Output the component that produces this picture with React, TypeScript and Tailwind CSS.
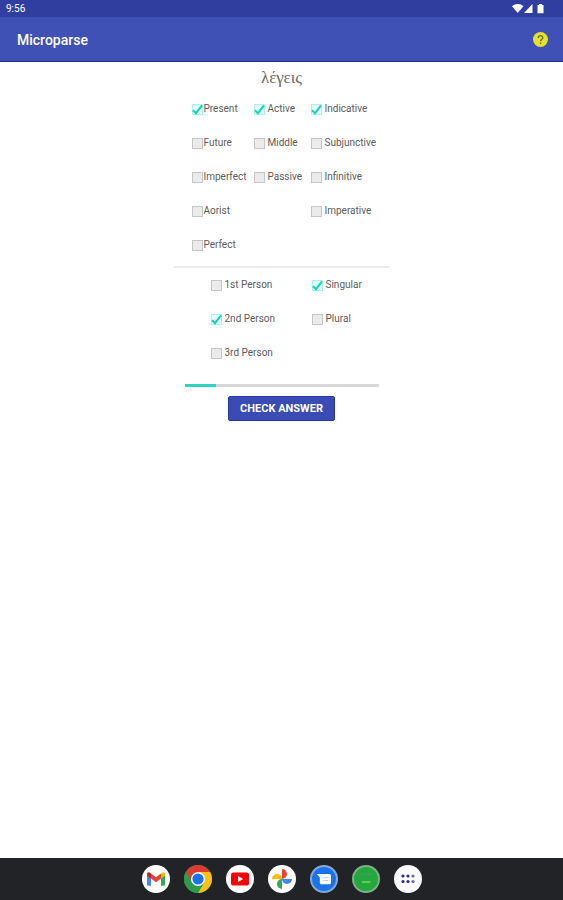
import { useState } from 'react';

const columns = [
  ['Present', 'Future', 'Imperfect', 'Aorist', 'Perfect'],
  ['Active', 'Middle', 'Passive'],
  ['Indicative', 'Subjunctive', 'Infinitive', 'Imperative'],
];
const persons = ['1st Person', '2nd Person', '3rd Person'];
const numbers = ['Singular', 'Plural'];

type OptionProps = {
  label: string;
  checked: boolean;
  onToggle: (label: string) => void;
  tight?: boolean;
};

const Option = ({ label, checked, onToggle, tight }: OptionProps) => (
  <label className={`flex h-[34px] items-center whitespace-nowrap text-[10px] leading-3 text-[#5c5c5c] ${tight ? 'gap-px' : 'gap-[3px]'}`}>
    <span className="grid size-[11px] shrink-0">
      <input
        type="checkbox"
        checked={checked}
        onChange={() => onToggle(label)}
        className="col-start-1 row-start-1 size-[11px] appearance-none border border-[#c6c6c6] bg-[#ebebeb] checked:border-[#a9f3e7] checked:bg-[#e6fdf9]"
      />
      {checked && (
        <svg viewBox="0 0 11 11" className="pointer-events-none z-10 col-start-1 row-start-1 size-[11px]" fill="none" stroke="#12d3bc" strokeWidth="2">
          <path d="M1 6.2 4 9.2 10 1.4" />
        </svg>
      )}
    </span>
    {label}
  </label>
);

const StatusBar = () => (
  <div className="flex h-[17px] items-center justify-between bg-[#303f9f] pl-[6px] pr-[18px] text-white">
    <span className="pt-px text-[10px] leading-none">9:56</span>
    <svg width="33" height="11" viewBox="0 0 33 11" fill="currentColor" aria-hidden="true">
      <path d="M0 3.2C3.2.4 8.3.4 11.5 3.2L5.75 10z" />
      <path d="M20.5 1v9H12z" />
      <path d="M25.5 2H27V1h3v1h1.5v8.2h-6z" />
    </svg>
  </div>
);

const Gmail = () => (
  <svg viewBox="0 0 28 28" className="size-7">
    <circle cx="14" cy="14" r="14" fill="#fff" />
    <path d="M5 10v9.5c0 .8.6 1.3 1.3 1.3H9v-8z" fill="#4285f4" />
    <path d="M23 10v9.5c0 .8-.6 1.3-1.3 1.3H19v-8z" fill="#34a853" />
    <path d="M9 8.5v5l5 3.8 5-3.8v-5l-5 3.8z" fill="#ea4335" />
    <path d="M5 9.2c0-2 2.2-2.8 4-.7v5l-4-3z" fill="#c5221f" />
    <path d="M23 9.2c0-2-2.2-2.8-4-.7v5l4-3z" fill="#fbbc04" />
  </svg>
);

const Chrome = () => (
  <svg viewBox="0 0 28 28" className="size-7">
    <circle cx="14" cy="14" r="14" fill="#34a853" />
    <path d="M14 7h12.1A14 14 0 0 0 1.9 7L8 17.5 14 14z" fill="#dc3b2e" />
    <path d="M14 7h12.1A14 14 0 0 1 14 28l6.1-10.5z" fill="#fbc116" />
    <path d="M1.9 7 8 17.5l6 3.5 6-3.5L14 28A14 14 0 0 1 1.9 7" fill="#2d9b4b" />
    <circle cx="14" cy="14" r="7" fill="#fff" />
    <circle cx="14" cy="14" r="5.6" fill="#1a73e8" />
  </svg>
);

const YouTube = () => (
  <svg viewBox="0 0 28 28" className="size-7">
    <circle cx="14" cy="14" r="14" fill="#fff" />
    <rect x="5" y="7.5" width="18" height="13" rx="2.6" fill="#f00" />
    <path d="m12 11 5.2 3-5.2 3z" fill="#fff" />
  </svg>
);

const Photos = () => (
  <svg viewBox="0 0 28 28" className="size-7">
    <circle cx="14" cy="14" r="14" fill="#fff" />
    <path d="M14 4a5 5 0 0 1 0 10z" fill="#ea4335" />
    <path d="M24 14a5 5 0 0 1-10 0z" fill="#4285f4" />
    <path d="M14 24a5 5 0 0 1 0-10z" fill="#34a853" />
    <path d="M4 14a5 5 0 0 1 10 0z" fill="#fbbc04" />
  </svg>
);

const Messages = () => (
  <svg viewBox="0 0 28 28" className="size-7">
    <circle cx="14" cy="14" r="13" fill="#1a73e8" stroke="#84a9d8" strokeWidth="2" />
    <path d="M6.8 9h12.4c1 0 1.8.8 1.8 1.8v6.6c0 1-.8 1.8-1.8 1.8h-7.6c-1 0-1.8-.8-1.8-1.8v-5.2z" fill="#fff" />
    <path d="M12.5 12.7h6M12.5 15.5h6" stroke="#b9d3f8" />
  </svg>
);

const Green = () => (
  <svg viewBox="0 0 28 28" className="size-7">
    <circle cx="14" cy="14" r="13" fill="#22a83c" stroke="#7fae8b" strokeWidth="2" />
    <path d="M8.5 9.3h11" stroke="#4a9668" strokeWidth="1.4" />
    <path d="M10 17h8.5" stroke="#7ddc4f" strokeWidth="1.4" />
  </svg>
);

const Apps = () => (
  <svg viewBox="0 0 28 28" className="size-7">
    <circle cx="14" cy="14" r="14" fill="#fafafe" />
    {[9, 14, 19].map((x) => (
      <g key={x} fill={x === 19 ? '#6e6e8c' : '#2b2f80'}>
        <circle cx={x} cy="11" r="1.6" />
        <circle cx={x} cy="16.5" r="1.6" />
      </g>
    ))}
  </svg>
);

const apps = [
  { name: 'Gmail', Icon: Gmail },
  { name: 'Chrome', Icon: Chrome },
  { name: 'YouTube', Icon: YouTube },
  { name: 'Photos', Icon: Photos },
  { name: 'Messages', Icon: Messages },
  { name: 'Microparse', Icon: Green },
  { name: 'All apps', Icon: Apps },
];

export default function App() {
  const [selected, setSelected] = useState(['Present', 'Active', 'Indicative', '2nd Person', 'Singular']);
  const progress = 16;

  const toggle = (label: string) => {
    setSelected(selected.includes(label) ? selected.filter((s) => s !== label) : [...selected, label]);
  };

  const renderOptions = (labels: string[], tight = false) =>
    labels.map((label) => (
      <Option key={label} label={label} checked={selected.includes(label)} onToggle={toggle} tight={tight} />
    ));

  return (
    <div className="flex min-h-screen flex-col bg-white font-[Roboto,sans-serif]">
      <StatusBar />
      <header className="flex h-[45px] items-center justify-between border-b border-[#1a30a0] bg-[#3f51b5] pl-[17px] pr-[15px]">
        <h1 className="pt-[2px] text-sm font-medium text-white">Microparse</h1>
        <button type="button" aria-label="Help" className="size-[15px]">
          <svg viewBox="0 0 15 15" aria-hidden="true">
            <circle cx="7.5" cy="7.5" r="7.5" fill="#e6e22a" />
            <path d="M5.3 5.9c0-3 4.5-2.9 4.5-.2 0 1.6-2.2 1.7-2.2 3.5M7.6 10.4v1.5" fill="none" stroke="#69703f" strokeWidth="1.4" />
          </svg>
        </button>
      </header>

      <main className="flex flex-1 flex-col items-center">
        <h2 className="pt-1 font-['Liberation_Serif',serif] text-[17px] leading-6 text-[#6a6a6a]">λέγεις</h2>

        <div className="flex w-[216px] border-b-2 border-[#ececec] pb-1 pl-[18px] pt-[2px]">
          <div className="w-[62px]">{renderOptions(columns[0], true)}</div>
          <div className="w-[57px]">{renderOptions(columns[1])}</div>
          <div>{renderOptions(columns[2])}</div>
        </div>

        <div className="flex w-[216px] pl-[37px]">
          <div className="w-[101px]">{renderOptions(persons)}</div>
          <div>{renderOptions(numbers)}</div>
        </div>

        <div
          role="progressbar"
          aria-label="Progress"
          aria-valuenow={progress}
          aria-valuemin={0}
          aria-valuemax={100}
          className="mt-[14px] h-[3px] w-[194px] bg-[#d8d8d8]"
        >
          <div className="h-full bg-[#2bd3c0]" style={{ width: `${progress}%` }} />
        </div>

        <button
          type="button"
          className="mt-[9px] h-[25px] rounded-xs border border-[#2438a8] bg-[#3a4cb4] px-[11px] text-[11px] font-bold uppercase leading-none text-white"
        >
          Check answer
        </button>
      </main>

      <nav aria-label="Dock" className="flex h-[42px] items-center justify-center gap-[14px] bg-[#222327]">
        {apps.map(({ name, Icon }) => (
          <button key={name} type="button" aria-label={name}>
            <Icon />
          </button>
        ))}
      </nav>
    </div>
  );
}
